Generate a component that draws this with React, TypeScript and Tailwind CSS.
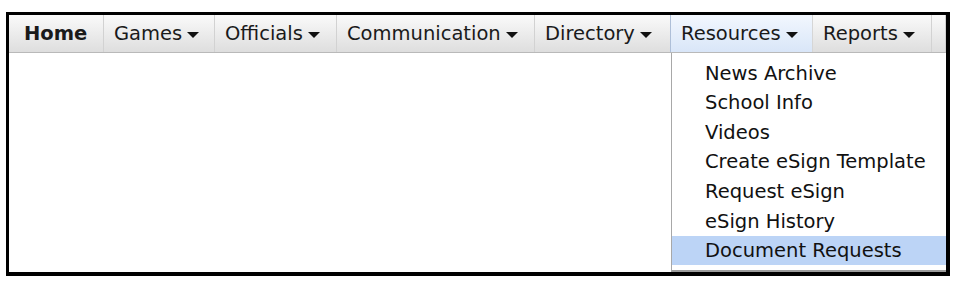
import React from "react";

const Arrow = () => (
  <svg width="12" height="6" viewBox="0 0 12 6" className="ml-[5px] mt-[1px]">
    <polygon points="0,0 12,0 6,6" fill="#111" />
  </svg>
);

type Item = { label: string; w: string; pl: string; bold?: boolean; arrow?: boolean; active?: boolean };

const items: Item[] = [
  { label: "Home", w: "w-[95px]", pl: "pl-[15px]", bold: true },
  { label: "Games", w: "w-[111px]", pl: "pl-[10px]", arrow: true },
  { label: "Officials", w: "w-[122px]", pl: "pl-[10px]", arrow: true },
  { label: "Communication", w: "w-[198px]", pl: "pl-[10px]", arrow: true },
  { label: "Directory", w: "w-[136px]", pl: "pl-[10px]", arrow: true },
  { label: "Resources", w: "w-[143px]", pl: "pl-[10px]", arrow: true, active: true },
  { label: "Reports", w: "w-[119px]", pl: "pl-[10px]", arrow: true },
];

const menu = [
  "News Archive",
  "School Info",
  "Videos",
  "Create eSign Template",
  "Request eSign",
  "eSign History",
  "Document Requests",
];

export default function App() {
  return (
    <div
      className="w-[960px] h-[286px] bg-white pt-[12px] pl-[6px]"
      style={{ fontFamily: '"DejaVu Sans", Verdana, sans-serif' }}
    >
      <div className="relative w-[944px] h-[264px] border-black border-t-[3px] border-l-[3px] border-r-[4px] border-b-[4px] bg-white">
        <div className="flex h-[38px] border-b border-[#b9b9b9] bg-gradient-to-b from-[#fafafa] to-[#dedede] text-[19.5px] text-[#1a1a1a]">
          {items.map((it) => (
            <div
              key={it.label}
              className={
                "flex items-center h-full shrink-0 pt-px border-r " +
                it.w +
                " " +
                it.pl +
                (it.active
                  ? " bg-gradient-to-b from-[#f2f7fe] to-[#d9e6f8] border-l border-l-[#aebfd8] border-r-[#d6d6d6] -ml-px"
                  : " border-[#d2d2d2]") +
                (it.bold ? " font-bold" : "")
              }
            >
              <span>{it.label}</span>
              {it.arrow && <Arrow />}
            </div>
          ))}
          <div className="flex-1 border-r border-[#cfcfcf]" />
        </div>
        <div className="absolute left-[662px] top-[38px] w-[275px] h-[219px] bg-white border-l border-[#a8a8a8] border-b-2 border-b-[#9c9c9c] pt-[5px] text-[19.5px] text-[#111]">
          {menu.map((m, i) => (
            <div
              key={m}
              className={
                "h-[29.6px] flex items-center pl-[33px] pt-px " +
                (i === menu.length - 1 ? "bg-[#bcd4f6]" : "")
              }
            >
              {m}
            </div>
          ))}
        </div>
      </div>
    </div>
  );
}
